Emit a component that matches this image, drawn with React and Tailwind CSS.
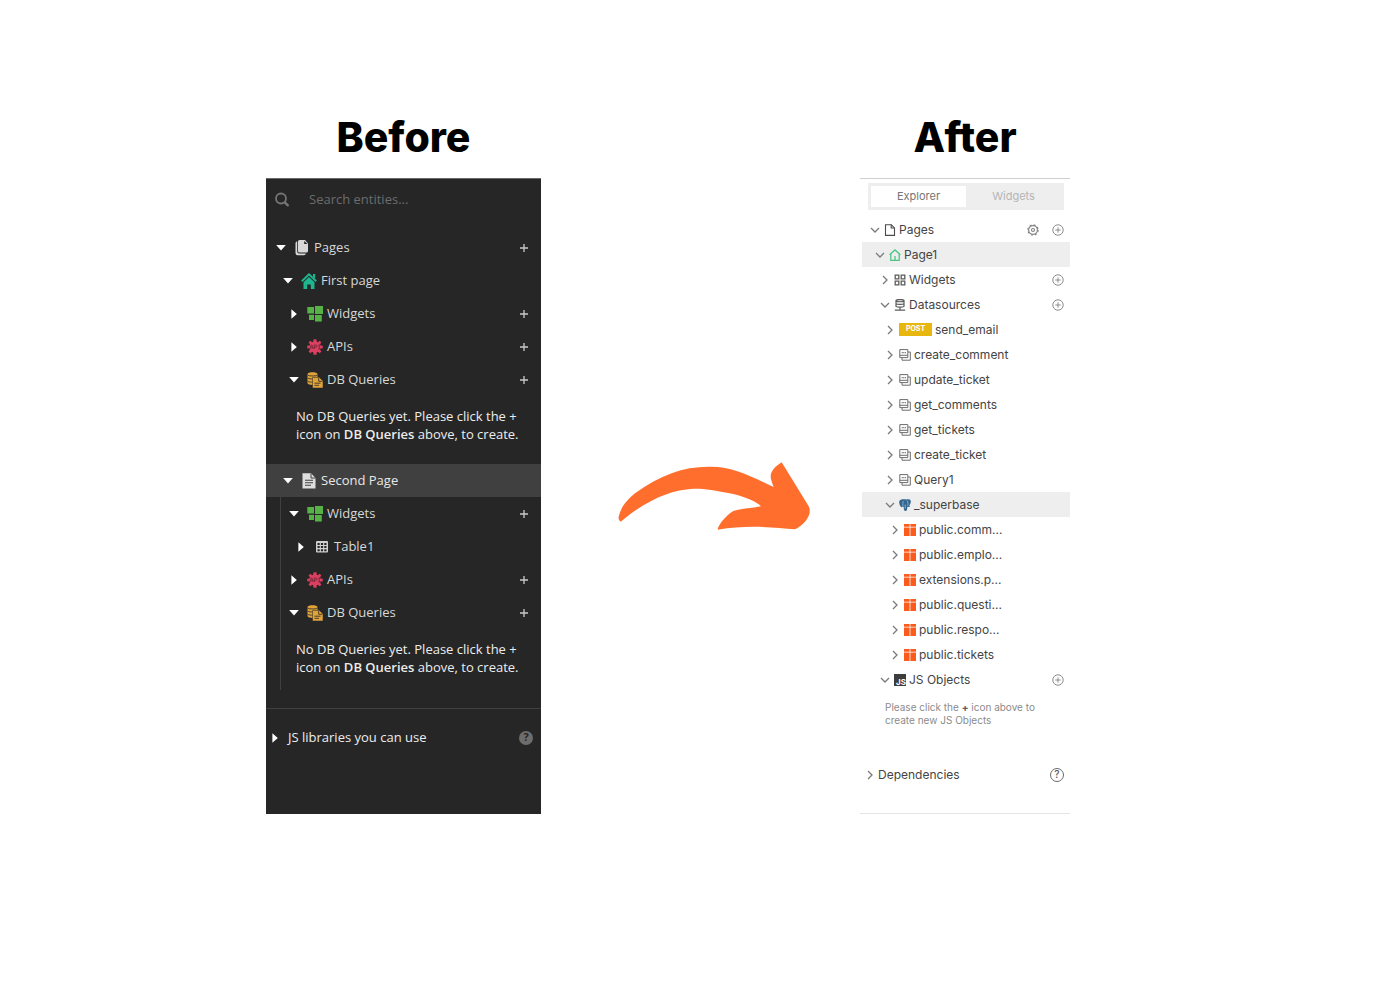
// ---- icons, dark sidebar ----

const Triangle = ({ open }) => (
  <svg viewBox="0 0 12 12" className="w-3 h-3 shrink-0 fill-white">
    {open ? <path d="M1.2 3h9.6L6 8.6z" /> : <path d="M3.4 1.2v9.6L8.8 6z" />}
  </svg>
);

const SearchIcon = () => (
  <svg viewBox="0 0 16 16" className="w-4 h-4 shrink-0" fill="none" stroke="#757575">
    <circle cx="7" cy="6.5" r="5" strokeWidth="1.8" />
    <path d="M10.8 10.300l3 3" strokeWidth="2.400" strokeLinecap="round" />
  </svg>
);

const PagesIcon = () => (
  <svg viewBox="0 0 16 16" className="w-4 h-4" fill="#d8d8d8">
    <path d="M5.500 0H11l3 3.500V11a1.500 1.500 0 0 1-1.500 1.500h-7A1.500 1.500 0 0 1 4 11V1.500A1.500 1.500 0 0 1 5.500 0z" />
    <path d="M3.200 1.300A2 2 0 0 0 1.500 3.300V13A2.200 2.200 0 0 0 3.700 15.200H10a2 2 0 0 0 1.900-1.700H5.200a2 2 0 0 1-2-2z" />
    <path d="M10.200.9v3.200h3.300z" fill="#262626" />
  </svg>
);

const HouseIcon = () => (
  <svg viewBox="0 0 16 16" className="w-4 h-4">
    <path d="M.8 8.300L8 1.300l7.200 7" fill="none" stroke="#1fb58f" strokeWidth="1.900" />
    <path d="M12 1h2.200v5L12 3.800z" fill="#1fb58f" />
    <path d="M2.500 9.300L8 4.100l5.500 5.200V16H9.800v-4.500H6.200V16H2.500z" fill="#1fb58f" />
  </svg>
);

const FileIcon = () => (
  <svg viewBox="0 0 16 16" className="w-4 h-4">
    <path d="M1.500.3H10L14.500 5v10.500h-13z" fill="#dedede" />
    <path d="M10 .5V5h4.500" fill="none" stroke="#404040" />
    <path d="M4 7.300h8M4 9.800h8M4 12.300h6" stroke="#404040" strokeWidth="1.100" />
  </svg>
);

const BlocksIcon = () => (
  <svg viewBox="0 0 16 16" className="w-4 h-4" fill="#56b146">
    <path d="M.3 1H7v6.500H.3zM8 0h8v8H8zM2 8.700h5V14H2zM8 9h6.800v6.500H8z" />
  </svg>
);

const ApiIcon = () => (
  <svg viewBox="0 0 16 16" className="w-4 h-4">
    <path
      d="M6.600.3h2.800l.4 2.400 1.100.5 1.800-1.400 1.700 1.700L13 5.200l.5 1.200 2.300.4v2.400l-2.300.4-.5 1.200 1.400 1.700-1.700 1.700-1.800-1.400-1.100.5-.4 2.400H6.600l-.4-2.400-1.100-.5-1.800 1.400-1.700-1.700L3 10.800l-.5-1.200-2.300-.4V6.800l2.300-.4L3 5.200 1.600 3.500l1.700-1.700 1.800 1.400 1.100-.5z"
      fill="#dc3f5f"
    />
    <path
      d="M2.800 10l1.500-4h.6l1.300 4M3.400 8.800h2.400M7.300 10V6h1.500c1.600 0 1.600 2.300 0 2.300H7.300M11.300 6h2M12.300 6v4M11.300 10h2"
      fill="none"
      stroke="#7c2a3c"
    />
  </svg>
);

const DbIcon = () => (
  <svg viewBox="0 0 16 16" className="w-4 h-4">
    <path d="M.5 2C.5-.3 10.500-.3 10.500 2v3.200H6.800V13C2.500 13 .5 12.200.5 11z" fill="#e0a33a" />
    <path d="M.5 3c1.500 1.300 8.500 1.300 10 0M.5 6c1 .8 3.500 1 6 1M.5 9.200c1 .8 3.500 1 6 1" fill="none" stroke="#262626" strokeWidth=".8" />
    <path d="M5.500 5.300h6.700L16 9v7H5.500z" fill="#e0a33a" stroke="#262626" strokeWidth=".5" />
    <path d="M11.700 6v3.300h3.500M7.500 11.200h6M7.500 13.300h4.500" fill="none" stroke="#262626" strokeWidth=".8" />
  </svg>
);

const TableIcon = () => (
  <svg viewBox="0 0 16 16" className="w-4 h-4">
    <rect x="2" y="2" width="12" height="11.500" rx="1" fill="#cfcfcf" />
    <path
      d="M3.500 4h2.200v2H3.500zM6.900 4h2.200v2H6.900zM10.300 4h2.200v2h-2.200zM3.500 7.100h2.200v2H3.500zM6.900 7.100h2.200v2H6.900zM10.300 7.100h2.200v2h-2.200zM3.500 10.200h2.200v2H3.500zM6.900 10.200h2.200v2H6.900zM10.300 10.200h2.200v2h-2.200z"
      fill="#262626"
    />
  </svg>
);

const PlusIcon = () => (
  <svg viewBox="0 0 10 10" className="w-[10px] h-[10px]" stroke="#c9c9c9" strokeWidth="1.300">
    <path d="M5 1v8M1 5h8" />
  </svg>
);

// ---- icons, light sidebar ----

const Chevron = ({ open }) => (
  <svg viewBox="0 0 12 12" className="w-3 h-3 shrink-0" fill="none" stroke="#7a7a7a" strokeWidth="1.300">
    {open ? <path d="M2 4l4 4 4-4" /> : <path d="M4 2l4 4-4 4" />}
  </svg>
);

const PageOutline = () => (
  <svg viewBox="0 0 12 12" className="w-3 h-3" fill="none" stroke="#4b4b4b" strokeWidth="1.100">
    <path d="M1.500.7h5.800l3.200 3.200v7.500h-9z" />
    <path d="M7.200.7V4h3.300" />
  </svg>
);

const HomeOutline = () => (
  <svg viewBox="0 0 12 12" className="w-3 h-3" fill="none" stroke="#4fc585" strokeWidth="1.300">
    <path d="M.6 5.800L6 .9l5.400 4.900M1.800 5v6.300h8.400V5M6 7v4" />
  </svg>
);

const GridOutline = () => (
  <svg viewBox="0 0 12 12" className="w-3 h-3" fill="none" stroke="#5c5c5c" strokeWidth="1.300">
    <path d="M1.200 1.200h3.600v3.600H1.200zM7.200 1.200h3.600v3.600H7.200zM1.200 7.200h3.600v3.600H1.200zM7.200 7.200h3.600v3.600H7.200z" />
  </svg>
);

const SourceIcon = () => (
  <svg viewBox="0 0 12 12" className="w-3 h-3" fill="none" stroke="#5c5c5c" strokeWidth="1.200">
    <path d="M2 1.300c1-1 7-1 8 0v6c-1 1-7 1-8 0zM2 2c1 1 7 1 8 0M2 4.700c1 1 7 1 8 0M6 8v3M.8 11.200h10.400" />
  </svg>
);

const QueryIcon = () => (
  <svg viewBox="0 0 12 12" className="w-3 h-3" fill="none" stroke="#6c6c6c">
    <path d="M.8.6h8v8h-8zM9 3h2.300v8.200H3V8.800M.8 6.300h8" />
    <path d="M2.700 3.700h1M4.300 3.700h1M5.900 3.700h1" strokeWidth="1.200" />
  </svg>
);

const ElephantIcon = () => (
  <svg viewBox="0 0 12 12" className="w-3 h-3">
    <path
      d="M2.300.5C.7.9 0 2.200.2 3.800.5 5.600 1.300 7.900 2.300 8.200c.6.100 1-.3 1.400-.8.300.2.700.3 1 .3 0 1.700.1 3.100.6 3.800.6.700 2 .6 2.500-.2.400-.8.400-2 .5-3.200.9.100 2.300-.1 2.900-.8-.6 0-1-.1-1-.4C11.300 5.400 12.200 3 11.700 1.700 10.900.2 8.900.1 7.600.6 5.900.1 3.900.1 2.300.5z"
      fill="#336791"
    />
    <path d="M4.200 2C3.600 3.300 3.900 5.500 3.800 7M8 1.500c1.200 1.400 1.100 3.600.6 5.700M6.200 5.500v4.200" fill="none" stroke="#c3d6e5" strokeWidth=".6" />
  </svg>
);

const GiftTable = () => (
  <svg viewBox="0 0 12 12" className="w-3 h-3" fill="#fb5c1d">
    <path d="M0 0h5.600v2.800H0zM6.400 0H12v2.800H6.400zM0 3.600h5.600V12H0zM6.400 3.600H12V12H6.400z" />
  </svg>
);

const JsIcon = () => (
  <span className="flex w-3 h-3 items-end justify-end bg-[#3d3d3d] text-white text-[8px] leading-[8px] font-bold">JS</span>
);

const CirclePlus = () => (
  <svg viewBox="0 0 12 12" className="w-3 h-3" fill="none" stroke="#8c8c8c">
    <circle cx="6" cy="6" r="5.200" />
    <path d="M6 3.300v5.400M3.300 6h5.400" />
  </svg>
);

const GearIcon = () => (
  <svg viewBox="0 0 12 12" className="w-3 h-3" fill="none" stroke="#858585">
    <circle cx="6" cy="6" r="4.400" strokeWidth="1.200" />
    <circle cx="6" cy="6" r="5.200" strokeWidth="1.100" strokeDasharray="2 2.080" />
    <circle cx="6" cy="6" r="1.500" strokeWidth="1.200" />
  </svg>
);

const BigArrow = () => (
  <svg viewBox="54 66 576 204" className="w-48 h-[68px]" fill="#ff6e2c">
    <path d="M62 245Q54 240 56 230C62 205 75 185 105 160C180 105 250 80 325 80C400 78 450 108 521 141C512 115 510 110 514 98C520 85 532 75 545 67L627 200C632 215 629 228 617 243Q600 262 585 268C520 262 440 254 353 269C353 258 375 228 400 213C420 205 450 206 483 199C470 185 440 172 400 162C340 150 310 145 280 146C210 150 140 180 62 245Z" />
  </svg>
);

// ---- dark sidebar ----

const darkIndent = ["pl-[9px]", "pl-[16px]", "pl-[22px]", "pl-[29px]"];

function DarkRow({ level, open, icon, label, add, active }) {
  return (
    <div className={`flex h-[33px] items-center justify-between pr-3 ${darkIndent[level]} ${active ? "bg-[#404040] text-[#e8e8e8]" : ""}`}>
      <button className="flex items-center" aria-expanded={!!open}>
        <Triangle open={open} />
        <span className="ml-[7px] mr-1 flex w-4 justify-center">{icon}</span>
        {label}
      </button>
      {add && (
        <button aria-label={`Add ${label}`}>
          <PlusIcon />
        </button>
      )}
    </div>
  );
}

const NoQueries = () => (
  <p className="pl-[30px] pt-[11px] leading-[18px] text-[#ededed]">
    No DB Queries yet. Please click the +<br />
    icon on <b className="font-semibold">DB Queries</b> above, to create.
  </p>
);

function Before() {
  return (
    <aside className="border-t border-[#6a6a6a] bg-[#262626] font-['Open_Sans',sans-serif] text-[13px] text-[#d8d8d8]">
      <label className="flex h-[42px] items-center gap-[19px] pl-2">
        <SearchIcon />
        <input
          type="text"
          aria-label="Search entities"
          placeholder="Search entities..."
          className="w-full bg-transparent outline-none placeholder:text-[#6c6c6c]"
        />
      </label>
      <div className="mt-[10px]">
        <DarkRow level={0} open icon={<PagesIcon />} label="Pages" add />
        <DarkRow level={1} open icon={<HouseIcon />} label="First page" />
        <DarkRow level={2} icon={<BlocksIcon />} label="Widgets" add />
        <DarkRow level={2} icon={<ApiIcon />} label="APIs" add />
        <DarkRow level={2} open icon={<DbIcon />} label="DB Queries" add />
        <NoQueries />
      </div>
      <div className="mt-[21px]">
        <DarkRow level={1} open icon={<FileIcon />} label="Second Page" active />
        <div className="relative pb-[14px]">
          <span className="absolute inset-y-0 left-[14px] w-px bg-[#404040]" />
          <DarkRow level={2} open icon={<BlocksIcon />} label="Widgets" add />
          <DarkRow level={3} icon={<TableIcon />} label="Table1" />
          <DarkRow level={2} icon={<ApiIcon />} label="APIs" add />
          <DarkRow level={2} open icon={<DbIcon />} label="DB Queries" add />
          <NoQueries />
        </div>
      </div>
      <div className="mt-[18px] mb-12 flex h-[58px] items-center justify-between border-t border-[#404040] pl-[3px] pr-2 text-[#ededed]">
        <button className="flex items-center gap-[7px] font-medium">
          <Triangle />
          JS libraries you can use
        </button>
        <button
          aria-label="Help"
          className="flex h-[14px] w-[14px] items-center justify-center rounded-full bg-[#6d6d6d] text-[11px] font-bold text-[#262626]"
        >
          ?
        </button>
      </div>
    </aside>
  );
}

// ---- light sidebar ----

const lightIndent = ["pl-[7px]", "pl-[12px]", "pl-[17px]", "pl-[22px]", "pl-[27px]"];

function LightRow({ level, open, icon, label, add, settings, active }) {
  return (
    <div className={`ml-[2px] flex h-[25px] items-center justify-between pr-[6px] ${lightIndent[level]} ${active ? "bg-[#eeeeee]" : ""}`}>
      <button className="flex items-center gap-[3px]" aria-expanded={!!open}>
        <Chevron open={open} />
        {icon}
        {label}
      </button>
      <span className="flex gap-[13px]">
        {settings && (
          <button aria-label="Settings">
            <GearIcon />
          </button>
        )}
        {add && (
          <button aria-label={`Add ${label}`}>
            <CirclePlus />
          </button>
        )}
      </span>
    </div>
  );
}

const queries = ["create_comment", "update_ticket", "get_comments", "get_tickets", "create_ticket", "Query1"];
const tables = ["public.comm...", "public.emplo...", "extensions.p...", "public.questi...", "public.respo...", "public.tickets"];

const PostBadge = () => (
  <span className="flex h-[13px] w-[33px] items-center justify-center bg-[#e8b70f] text-[7px] font-bold text-white">POST</span>
);

function After() {
  return (
    <aside className="flex flex-col border-y border-t-[#cfcfcf] border-b-[#e4e4e4] font-['Inter',sans-serif] text-[12px] text-[#444444]">
      <div className="ml-2 mr-[6px] mt-1 mb-[7px] flex h-[27px] bg-[#eeeeee] p-[3px] text-[11px]">
        <button className="flex-1 bg-white text-[#757575]">Explorer</button>
        <button className="flex-1 text-[#b5b5b5]">Widgets</button>
      </div>
      <LightRow level={0} open icon={<PageOutline />} label="Pages" settings add />
      <LightRow level={1} open icon={<HomeOutline />} label="Page1" active />
      <LightRow level={2} icon={<GridOutline />} label="Widgets" add />
      <LightRow level={2} open icon={<SourceIcon />} label="Datasources" add />
      <LightRow level={3} icon={<PostBadge />} label="send_email" />
      {queries.map((name) => (
        <LightRow key={name} level={3} icon={<QueryIcon />} label={name} />
      ))}
      <LightRow level={3} open icon={<ElephantIcon />} label="_superbase" active />
      {tables.map((name) => (
        <LightRow key={name} level={4} icon={<GiftTable />} label={name} />
      ))}
      <LightRow level={2} open icon={<JsIcon />} label="JS Objects" add />
      <p className="mt-[9px] pl-[25px] text-[10px] leading-[13px] text-[#8c8c8c]">
        Please click the <b className="text-[#5c5c5c]">+</b> icon above to
        <br />
        create new JS Objects
      </p>
      <div className="mt-[35px] flex h-[25px] items-center justify-between pl-1 pr-[6px]">
        <button className="flex items-center gap-[2px]">
          <Chevron />
          Dependencies
        </button>
        <button
          aria-label="Help"
          className="flex h-[14px] w-[14px] items-center justify-center rounded-full border border-[#6b6b6b] text-[10px] font-medium text-[#5c5c5c]"
        >
          ?
        </button>
      </div>
    </aside>
  );
}

export default function App() {
  return (
    <main className="flex min-h-screen justify-center bg-white pt-[113px] pr-16">
      <div className="grid grid-cols-[275px_319px_210px] content-start gap-y-[17px]">
        <h2 className="text-center font-['Inter',sans-serif] text-[41px] leading-12 font-extrabold text-black">Before</h2>
        <span />
        <h2 className="text-center font-['Inter',sans-serif] text-[41px] leading-12 font-extrabold text-black">After</h2>
        <Before />
        <div className="flex items-center pl-[77px]">
          <BigArrow />
        </div>
        <After />
      </div>
    </main>
  );
}
